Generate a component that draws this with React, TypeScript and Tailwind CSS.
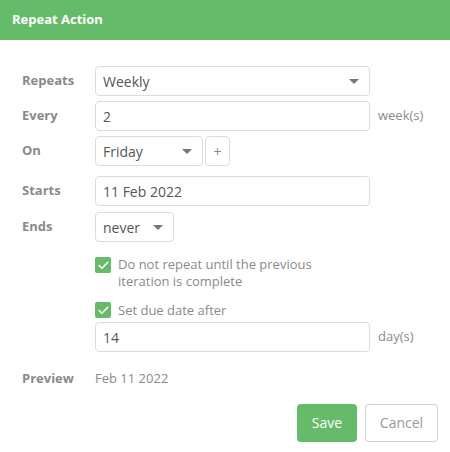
import { Check } from 'lucide-react';

const font = { fontFamily: '"Open Sans", "Noto Sans", sans-serif' };

function Caret() {
  return <span className="h-0 w-0 border-x-[5px] border-t-[5px] border-x-transparent border-t-[#777]" />;
}

function Label({ children }: { children: React.ReactNode }) {
  return <div className="w-[73px] shrink-0 text-[13px] font-bold text-[#8a8a8a]">{children}</div>;
}

function Box({ children, className = '' }: { children: React.ReactNode; className?: string }) {
  return (
    <div
      className={`flex h-[30px] items-center rounded-[4px] border border-[#dcdcdc] bg-white px-[7px] text-[14px] text-[#555] ${className}`}
    >
      {children}
    </div>
  );
}

function Tick() {
  return (
    <span className="flex h-4 w-4 shrink-0 items-center justify-center rounded-[2px] bg-[#66bb6a]">
      <Check size={13} strokeWidth={3} className="text-white" />
    </span>
  );
}

export default function App() {
  return (
    <div className="h-[452px] w-[450px] bg-white" style={font}>
      <div className="flex h-10 items-center bg-[#66bb6a] px-3 text-[13px] font-bold text-white">Repeat Action</div>

      <div className="flex flex-col pl-[22px] pt-[26px]">
        <div className="flex items-center">
          <Label>Repeats</Label>
          <Box className="w-[275px] justify-between pr-[10px]">
            <span>Weekly</span>
            <Caret />
          </Box>
        </div>

        <div className="mt-[5px] flex items-center">
          <Label>Every</Label>
          <Box className="w-[275px]">2</Box>
          <span className="ml-[8px] text-[13px] text-[#8a8a8a]">week(s)</span>
        </div>

        <div className="mt-[5px] flex items-center">
          <Label>On</Label>
          <Box className="w-[108px] justify-between pr-[10px]">
            <span>Friday</span>
            <Caret />
          </Box>
          <Box className="ml-[2px] w-[25px] justify-center px-0 text-[#888]">+</Box>
        </div>

        <div className="mt-[10px] flex items-center">
          <Label>Starts</Label>
          <Box className="w-[275px]">11 Feb 2022</Box>
        </div>

        <div className="mt-[6px] flex items-center">
          <Label>Ends</Label>
          <Box className="w-[79px] justify-between pr-[10px]">
            <span>never</span>
            <Caret />
          </Box>
        </div>

        <div className="mt-[15px] flex items-start pl-[73px]">
          <Tick />
          <span className="ml-[7px] -mt-px w-[215px] text-[13px] leading-[17px] text-[#8a8a8a]">
            Do not repeat until the previous iteration is complete
          </span>
        </div>

        <div className="mt-[12px] flex items-center pl-[73px]">
          <Tick />
          <span className="ml-[7px] text-[13px] leading-[16px] text-[#8a8a8a]">Set due date after</span>
        </div>

        <div className="mt-[4px] flex items-center pl-[73px]">
          <Box className="w-[275px]">14</Box>
          <span className="ml-[8px] text-[13px] text-[#8a8a8a]">day(s)</span>
        </div>

        <div className="mt-[17px] flex items-center">
          <Label>Preview</Label>
          <span className="text-[13px] text-[#8a8a8a]">Feb 11 2022</span>
        </div>
      </div>

      <div className="mt-[15px] flex justify-end gap-2 pr-3">
        <button className="h-[38px] w-[60px] rounded-[4px] bg-[#66bb6a] text-[14px] text-white">Save</button>
        <button className="h-[38px] w-[73px] rounded-[4px] border border-[#d0d0d0] bg-white text-[14px] text-[#999]">
          Cancel
        </button>
      </div>
    </div>
  );
}
